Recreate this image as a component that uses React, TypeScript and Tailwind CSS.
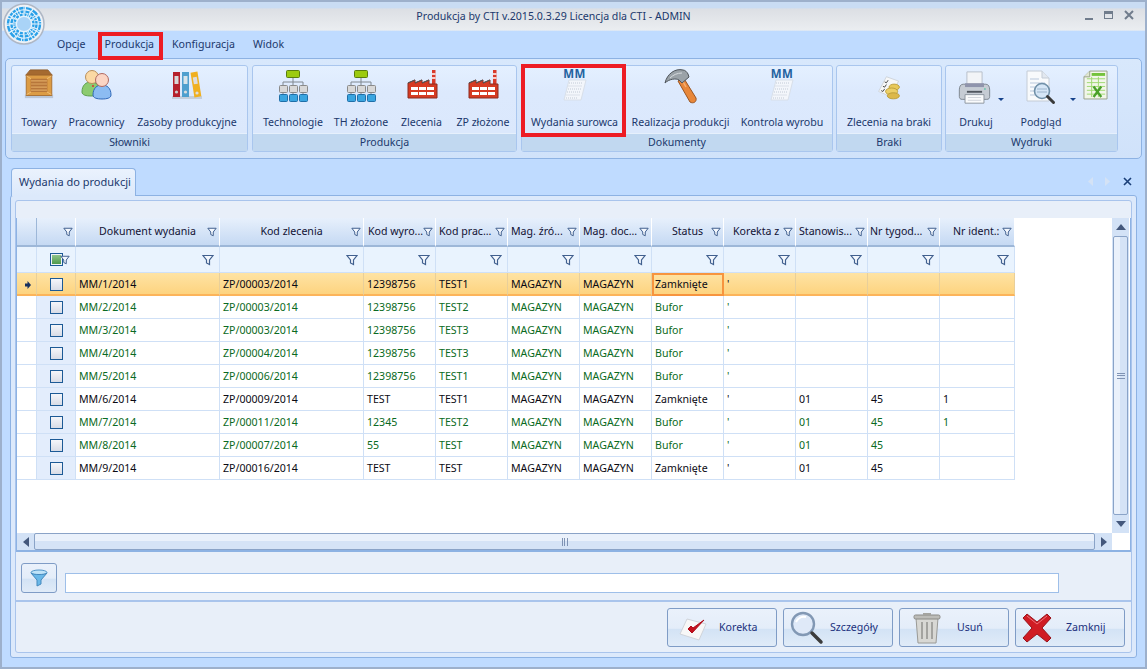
import type { ReactNode } from 'react'

const COLS =
  'grid grid-cols-[20px_39px_144px_144px_72px_72px_72px_72px_72px_72px_72px_72px_75px]'

const ROWS = [
  ['MM/1/2014', 'ZP/00003/2014', '12398756', 'TEST1', 'Zamknięte', '', '', ''],
  ['MM/2/2014', 'ZP/00003/2014', '12398756', 'TEST2', 'Bufor', '', '', ''],
  ['MM/3/2014', 'ZP/00003/2014', '12398756', 'TEST3', 'Bufor', '', '', ''],
  ['MM/4/2014', 'ZP/00004/2014', '12398756', 'TEST3', 'Bufor', '', '', ''],
  ['MM/5/2014', 'ZP/00006/2014', '12398756', 'TEST1', 'Bufor', '', '', ''],
  ['MM/6/2014', 'ZP/00009/2014', 'TEST', 'TEST1', 'Zamknięte', '01', '45', '1'],
  ['MM/7/2014', 'ZP/00011/2014', '12345', 'TEST2', 'Bufor', '01', '45', '1'],
  ['MM/8/2014', 'ZP/00007/2014', '55', 'TEST', 'Bufor', '01', '45', ''],
  ['MM/9/2014', 'ZP/00016/2014', 'TEST', 'TEST', 'Zamknięte', '01', '45', ''],
]

const HEADERS = [
  { label: 'Dokument wydania', cls: 'justify-center' },
  { label: 'Kod zlecenia', cls: 'justify-center' },
  { label: 'Kod wyro...', cls: 'pl-[4px]' },
  { label: 'Kod prac...', cls: 'pl-[3px]' },
  { label: 'Mag. źró...', cls: 'pl-[3px]' },
  { label: 'Mag. doc...', cls: 'pl-[3px]' },
  { label: 'Status', cls: 'justify-center' },
  { label: 'Korekta z', cls: 'pl-[9px]' },
  { label: 'Stanowis...', cls: 'pl-[3px]' },
  { label: 'Nr tygod...', cls: 'pl-[2px]' },
  { label: 'Nr ident.:', cls: 'pl-[13px]' },
]

function Funnel({ big }: { big?: boolean }) {
  return (
    <svg width={big ? 12 : 10} height={big ? 12 : 10} viewBox="0 0 12 12">
      <path d="M1 1.5h10L7.5 6v4.5l-3-1.5V6z" fill="#f4f8fe" stroke="#41608f" strokeWidth="1.2" />
    </svg>
  )
}

function Crate() {
  return (
    <svg width="30" height="32" viewBox="0 0 34 36">
      <rect x="1" y="30" width="32" height="4" fill="#b9c6d8" />
      <path d="M7 2h20l5 6H2z" fill="#a56a30" stroke="#8d5a28" />
      <rect x="2.5" y="8" width="29" height="23" fill="#dc9c45" stroke="#a86d2d" />
      <rect x="7.5" y="12" width="19" height="15" fill="#b7763a" />
      <path d="M8 14.5h18M8 18h18M8 21.5h18M8 25h18" stroke="#dfa862" strokeWidth="1.3" />
      <path d="M3 9l5 3M31 9l-5 3M3 30l5-3M31 30l-5-3" stroke="#f0c27a" />
    </svg>
  )
}

function People() {
  return (
    <svg width="34" height="34" viewBox="0 0 34 34">
      <path d="M2 24c0-7 4-10 9-10s9 3 9 10c0 3-4 4-9 4s-9-1-9-4z" fill="#8ccb70" stroke="#5d9e4e" />
      <circle cx="12" cy="9" r="6.5" fill="#fbd9a4" stroke="#b98f5c" />
      <circle cx="13" cy="18" r="1" fill="#e03030" />
      <path d="M13 27c0-7 4-10 9-10s9 3 9 10c0 3-4 4-9 4s-9-1-9-4z" fill="#8cbcf2" stroke="#2f68b8" />
      <circle cx="22" cy="12" r="6.5" fill="#fbd5c4" stroke="#b06a62" />
    </svg>
  )
}

function Binders() {
  return (
    <svg width="32" height="32" viewBox="0 0 32 32" className="mt-[2px]">
      <rect x="1" y="26" width="30" height="3" fill="#c4cedb" />
      <rect x="2" y="2" width="7" height="25" fill="#b5202c" />
      <rect x="3.5" y="6" width="4" height="8" fill="#d8d8d8" />
      <circle cx="5.5" cy="22" r="1.6" fill="#ccc" />
      <rect x="11" y="2" width="7" height="25" fill="#4f9fce" />
      <rect x="12.5" y="6" width="4" height="8" fill="#d8e4ea" />
      <circle cx="14.5" cy="22" r="1.6" fill="#ddd" />
      <rect x="21.5" y="2" width="7" height="25" fill="#f0b020" transform="rotate(-9 25 15)" />
      <rect x="23" y="7" width="4" height="7" fill="#ddd" transform="rotate(-9 25 15)" />
      <circle cx="26" cy="23" r="1.6" fill="#ddd" />
    </svg>
  )
}

function Hierarchy() {
  const box = (x: number, y: number, fill: string, stroke: string, w = 8, h = 7) => (
    <rect x={x + 0.5} y={y + 0.5} width={w} height={h} rx="1" fill={fill} stroke={stroke} strokeWidth="1" />
  )
  return (
    <svg width="32" height="34" viewBox="0 0 32 34">
      <path d="M16 9v5M6 17v-3h20v3M16 14v3M6 25v2M16 25v2M26 25v2" stroke="#808890" fill="none" />
      {box(9, 2, '#9ccb10', '#5a7e10', 13, 7)}
      {box(2, 17, '#d8d8d8', '#8a8a8a')}
      {box(12, 17, '#d8d8d8', '#8a8a8a')}
      {box(22, 17, '#d8d8d8', '#8a8a8a')}
      {box(2, 26, '#3aa5e0', '#1f6fa8')}
      {box(12, 26, '#3aa5e0', '#1f6fa8')}
      {box(22, 26, '#3aa5e0', '#1f6fa8')}
    </svg>
  )
}

function Factory() {
  return (
    <svg width="32" height="32" viewBox="0 0 32 32">
      <rect x="26" y="2" width="3.5" height="14" fill="#d83a2a" />
      <path d="M26 6h3.5M26 10h3.5" stroke="#fff" strokeWidth="1.4" />
      <path d="M2 30V15l7-3v3l7-3v3l7-3v4h8v14z" fill="#d63a22" stroke="#8c2c20" />
      <path d="M2 15l7-3M9 15l7-3M16 15l7-3" stroke="#555" strokeWidth="1.2" />
      <rect x="5" y="19" width="7" height="3" fill="#fff" />
      <rect x="13" y="19" width="7" height="3" fill="#fff" />
      <rect x="21" y="19" width="7" height="3" fill="#fff" />
      <rect x="5" y="24" width="7" height="3" fill="#fff" />
      <rect x="13" y="24" width="7" height="3" fill="#fff" />
      <rect x="21" y="24" width="7" height="3" fill="#fff" />
    </svg>
  )
}

function MmDoc() {
  return (
    <div className="flex flex-col items-center">
      <span className="text-[11.5px] leading-[12px] font-bold tracking-[0.5px] text-[#23629f] h-[11px]">MM</span>
      <svg width="24" height="22" viewBox="0 0 24 22">
        <path d="M6 1h17l-5 20H1z" fill="#f3f6fb" stroke="#d8dfe9" />
        <path d="M6 4h14M5.500 7h14M5 10h13M4 13h13M3.500 16h13M3 19h12" stroke="#c2cad6" strokeDasharray="1 1" />
      </svg>
    </div>
  )
}

function Hammer() {
  return (
    <svg width="34" height="36" viewBox="0 0 34 36">
      <path d="M14 13l5-4 13 21c1 4-3 6-6 4z" fill="#e8873a" stroke="#9a5420" />
      <path d="M18 12l4 7" stroke="#f5b070" strokeWidth="1.5" />
      <path d="M1 15C3 6 11 0 19 2c2 0 4 2 5 4l1 3-7 6-3-3c-3-2-10-1-14 3z" fill="#9aa2a8" stroke="#50565c" />
      <path d="M6 10c3-3 7-5 12-5" stroke="#d6dade" fill="none" />
    </svg>
  )
}

function Braki() {
  return (
    <svg width="26" height="26" viewBox="0 0 30 30" className="mt-[7px]">
      <path d="M12 2l14 5-9 18L3 19z" fill="#f6f7f8" stroke="#ccd2d8" />
      <path d="M10 8l2 1 2-3M8 13l2 1 2-3M6 18l2 1 2-3" stroke="#333" fill="none" />
      <ellipse cx="21" cy="14" rx="6" ry="3.500" fill="#e8c858" stroke="#b89a38" />
      <ellipse cx="18" cy="19" rx="7" ry="4" fill="#eccf66" stroke="#b89a38" />
      <ellipse cx="20" cy="24" rx="7" ry="3.500" fill="#dcb84a" stroke="#b89a38" />
    </svg>
  )
}

function Printer() {
  return (
    <svg width="33" height="36" viewBox="0 0 34 38" className="mt-[2px] -ml-[4px]">
      <path d="M9 2h16v14H9z" fill="#f2f4f7" stroke="#b6bec8" />
      <path d="M5 15h24c3 0 4 3 4 6v7c0 2-1 3-3 3H4c-2 0-3-1-3-3v-7c0-3 1-6 4-6z" fill="#c6ccd4" stroke="#7c848e" />
      <rect x="7" y="14" width="20" height="4" fill="#8f94ac" />
      <circle cx="28" cy="20" r="1" fill="#6fc8b0" />
      <path d="M7 26h20v9H7z" fill="#fafbfc" stroke="#8c949e" />
      <path d="M9 23h16" stroke="#50565e" strokeWidth="2" />
      <path d="M10 29h14M10 32h14" stroke="#cfd4da" />
    </svg>
  )
}

function Preview() {
  return (
    <svg width="32" height="36" viewBox="0 0 32 36" className="mt-[2px]">
      <path d="M2 1h15l7 7v23H2z" fill="#f8fafc" stroke="#c4ccd6" />
      <path d="M17 1v7h7" fill="#e2e8f0" stroke="#c4ccd6" />
      <path d="M5 9h9M5 13h15M5 17h6M5 21h6M5 25h8" stroke="#b9c8dc" />
      <circle cx="17" cy="21" r="7.500" fill="#cfe2f5" fillOpacity="0.85" stroke="#7090a8" strokeWidth="1.6" />
      <path d="M12 19h10M12 22h10" stroke="#9cb4cc" />
      <path d="M22.500 26.500l6 6" stroke="#3a3a3a" strokeWidth="3" strokeLinecap="round" />
    </svg>
  )
}

function Excel() {
  return (
    <svg width="25" height="31" viewBox="0 0 26 32" className="mt-[2px] -ml-[2px]">
      <path d="M7 1h18v29H1V7z" fill="#f2f6ea" stroke="#97a088" />
      <path d="M7 1v6H1" fill="#dfe6d0" stroke="#97a088" />
      <rect x="9" y="3" width="14" height="3" fill="#74c23c" />
      <path d="M4 9h19M4 13h19M4 17h19M4 21h19M4 25h19M9 7v21M16 7v21" stroke="#9ed870" />
      <path d="M11 17l8 11M19 17l-8 11" stroke="#4aa02a" strokeWidth="2.4" />
    </svg>
  )
}

function CheckPaper() {
  return (
    <svg width="28" height="28" viewBox="0 0 28 28">
      <path d="M8 5l19 5-7 16L1 20z" fill="#f7f7f7" stroke="#d0d4da" />
      <path d="M9 15l4 4 12-13-11 8-2-2z" fill="#c4101c" stroke="#b00c18" />
    </svg>
  )
}

function BigLens() {
  return (
    <svg width="34" height="34" viewBox="0 0 34 34">
      <circle cx="13" cy="13" r="11" fill="#dfe9f8" stroke="#8298b4" strokeWidth="2.4" />
      <path d="M6 11c2-4 6-6 10-5" stroke="#fff" strokeWidth="2" fill="none" />
      <path d="M22 22l9 9" stroke="#3c3c3c" strokeWidth="3.500" strokeLinecap="round" />
    </svg>
  )
}

function Trash() {
  return (
    <svg width="28" height="32" viewBox="0 0 28 32">
      <path d="M3 6h22l-2 25H5z" fill="#d8d8d4" stroke="#9a9a96" />
      <rect x="1" y="3" width="26" height="4" rx="1.500" fill="#bcbcb8" stroke="#8a8a86" />
      <rect x="10" y="1" width="8" height="2" fill="#a4a4a0" />
      <path d="M9 10v17M14 10v17M19 10v17" stroke="#8e8e8a" strokeWidth="1.4" />
    </svg>
  )
}

function RedX() {
  return (
    <svg width="30" height="30" viewBox="0 0 30 30">
      <path
        d="M5 1l10 8 10-8 4 4-9 10 9 10-4 4-10-8-10 8-4-4 9-10-9-10z"
        fill="#d01c24"
        stroke="#98141c"
      />
      <path d="M5 3l10 8 10-8" stroke="#ee7078" fill="none" />
    </svg>
  )
}

function Logo() {
  const spokes = [0, 30, 60, 90, 120, 150]
  return (
    <svg width="42" height="42" viewBox="0 0 42 42">
      <circle cx="21" cy="21" r="20" fill="#eef1f6" stroke="#aeb7c5" strokeWidth="1.5" />
      <circle cx="21" cy="21" r="17.500" fill="#e4f2fc" />
      <circle cx="21" cy="21" r="16" fill="none" stroke="#29a0e8" strokeWidth="2.4" strokeDasharray="6 1" />
      <circle cx="21" cy="21" r="12.500" fill="none" stroke="#29a0e8" strokeWidth="2.4" strokeDasharray="4 1" />
      <circle cx="21" cy="21" r="9.500" fill="none" stroke="#29a0e8" strokeWidth="2.4" strokeDasharray="3 1" />
      {spokes.map((a) => (
        <path key={a} d="M21 3v36" stroke="#e4f2fc" strokeWidth="1" transform={`rotate(${a} 21 21)`} />
      ))}
      <circle cx="21" cy="21" r="7" fill="#a9d3f7" />
    </svg>
  )
}

function RibbonBtn({ w, icon, label, mark }: { w: string; icon: ReactNode; label: string; mark?: boolean }) {
  return (
    <div className={`${w} relative flex flex-col items-center shrink-0`}>
      <div className="h-[49px] pt-[2px] flex items-start justify-center">{icon}</div>
      <span className="whitespace-nowrap leading-[14px] text-[#20386c]">{label}</span>
      {mark && (
        <div className="absolute left-[-1px] top-[-2px] w-[105px] h-[73px] border-4 border-[#ed1c24]" />
      )}
    </div>
  )
}

function Group({ w, title, children }: { w: string; title: string; children: ReactNode }) {
  return (
    <div className={`${w} h-[87px] flex flex-col border border-[#a9c6ee] rounded-[3px] overflow-visible`}>
      <div className="h-[67px] flex bg-[linear-gradient(#e4f0ff,#dce9fd_40%,#dbe8fc)] rounded-t-[3px]">{children}</div>
      <div className="flex-1 flex items-center justify-center bg-[#c1d8f0] text-[#20386c] border-t border-[#e6f0fc]">
        {title}
      </div>
    </div>
  )
}

function ActionBtn({ icon, label, iconCls, labelCls }: { icon: ReactNode; label: string; iconCls: string; labelCls: string }) {
  return (
    <div className="w-[110px] h-[39px] relative flex items-center border border-[#7f9cc6] rounded-[3px] bg-[linear-gradient(#eaf1fb,#e4edf9_52%,#d3e3f5_55%,#e0ebf8)]">
      <div className={`${iconCls} shrink-0 flex`}>{icon}</div>
      <span className={`${labelCls} text-[#20307c]`}>{label}</span>
    </div>
  )
}

function Triangle({ dir }: { dir: 'up' | 'down' | 'left' | 'right' }) {
  const d = { up: 'M0 6L5 0l5 6z', down: 'M0 0h10L5 6z', left: 'M6 0v10L0 5z', right: 'M0 0v10l6-5z' }[dir]
  return (
    <svg width={dir === 'up' || dir === 'down' ? 10 : 6} height={dir === 'up' || dir === 'down' ? 6 : 10}>
      <path d={d} fill="#44587c" />
    </svg>
  )
}

export default function App() {
  return (
    <div className="relative w-screen h-screen overflow-hidden flex flex-col bg-[#bfdbff] border-2 border-[#9db0cb] text-[10.6px] [font-family:'Noto_Sans',sans-serif]">
      <div className="absolute left-px top-px z-10">
        <Logo />
      </div>

      {/* title bar */}
      <div className="relative h-[29px] shrink-0 flex items-center justify-center bg-[linear-gradient(#c9dcf3,#c9dcf3_20%,#dcdfe4_24%,#eaedf0_95%,#d5e4f7)] text-[#20386c]">
        <span className="mr-[40px]">Produkcja by CTI v.2015.0.3.29 Licencja dla CTI - ADMIN</span>
        <div className="absolute right-[11px] top-[8px] flex items-center gap-[11px]">
          <div className="w-[8px] h-[2px] mt-[8px] bg-[#707c8c]" />
          <div className="w-[9px] h-[8px] border border-[#707c8c] border-t-[3px]" />
          <svg width="10" height="10" viewBox="0 0 10 10">
            <path d="M1 1l8 8M9 1l-8 8" stroke="#707c8c" strokeWidth="2" />
          </svg>
        </div>
      </div>

      {/* menu */}
      <div className="h-[27px] shrink-0 flex items-center pt-px pl-[46px] text-[#20386c]">
        <span className="pl-[9px] pr-[10px]">Opcje</span>
        <span className="relative px-[9px] h-[26px] flex items-center">
          Produkcja
          <span className="absolute left-[2px] top-0 w-[65px] h-[28px] border-4 border-[#ed1c24]" />
        </span>
        <span className="pl-[9px] pr-[9px]">Konfiguracja</span>
        <span className="pl-[9px] pr-[9px]">Widok</span>
      </div>

      {/* ribbon */}
      <div className="h-[101px] shrink-0 mx-[3px] pl-[5px] pt-[6px] flex border border-[#8db2e3] rounded-[5px] bg-[linear-gradient(#d8e8fc,#d0e2fa)]">
        <Group w="w-[237px] mr-[4px]" title="Słowniki">
          <RibbonBtn w="w-[54px]" icon={<Crate />} label="Towary" />
          <RibbonBtn w="w-[61px]" icon={<People />} label="Pracownicy" />
          <RibbonBtn w="w-[120px]" icon={<Binders />} label="Zasoby produkcyjne" />
        </Group>
        <Group w="w-[265px] mr-[4px]" title="Produkcja">
          <RibbonBtn w="w-[80px]" icon={<Hierarchy />} label="Technologie" />
          <RibbonBtn w="w-[56px]" icon={<Hierarchy />} label="TH złożone" />
          <RibbonBtn w="w-[65px]" icon={<Factory />} label="Zlecenia" />
          <RibbonBtn w="w-[58px]" icon={<Factory />} label="ZP złożone" />
        </Group>
        <Group w="w-[312px] mr-[3px]" title="Dokumenty">
          <RibbonBtn w="w-[105px]" icon={<MmDoc />} label="Wydania surowca" mark />
          <RibbonBtn w="w-[107px]" icon={<Hammer />} label="Realizacja produkcji" />
          <RibbonBtn w="w-[96px]" icon={<MmDoc />} label="Kontrola wyrobu" />
        </Group>
        <Group w="w-[106px] mr-[3px]" title="Braki">
          <RibbonBtn w="w-[104px]" icon={<Braki />} label="Zlecenia na braki" />
        </Group>
        <Group w="w-[173px]" title="Wydruki">
          <RibbonBtn w="w-[60px]" icon={<Printer />} label="Drukuj" />
          <div className="w-0 relative">
            <div className="absolute left-[-8px] top-[32px] w-0 h-0 border-x-[3px] border-x-transparent border-t-[3px] border-t-[#15428b]" />
          </div>
          <RibbonBtn w="w-[70px]" icon={<Preview />} label="Podgląd" />
          <div className="w-0 relative">
            <div className="absolute left-[-6px] top-[32px] w-0 h-0 border-x-[3px] border-x-transparent border-t-[3px] border-t-[#15428b]" />
          </div>
          <RibbonBtn w="w-[41px]" icon={<Excel />} label="" />
        </Group>
      </div>

      {/* tab strip */}
      <div className="h-[27px] mt-[9px] shrink-0 ml-[8px] mr-[8px] flex items-end justify-between">
        <div className="relative z-10 -mb-px ml-[1px] w-[125px] h-[28px] flex items-center pl-[7px] border border-b-0 border-[#8db2e3] rounded-t-[4px] bg-[linear-gradient(#eaf2fd,#dce9fb)] text-[11px] text-[#20386c] whitespace-nowrap">
          Wydania do produkcji
        </div>
        <div className="flex items-center gap-[12px] h-[27px] pr-[5px]">
          <svg width="5" height="9">
            <path d="M5 0v9L0 4.500z" fill="#d4e2f5" />
          </svg>
          <svg width="5" height="9">
            <path d="M0 0v9l5-4.500z" fill="#d4e2f5" />
          </svg>
          <svg width="9" height="9" className="ml-[1px]">
            <path d="M1 1l7 7M8 1l-7 7" stroke="#1a3f78" strokeWidth="1.6" />
          </svg>
        </div>
      </div>

      {/* tab page */}
      <div className="flex-1 min-h-0 mx-[8px] mb-[9px] p-[4px] border border-[#8db2e3] rounded-[3px] bg-[#dce9fb] flex flex-col">
        <div className="flex-1 min-h-0 flex flex-col border border-[#a9c4ec] rounded-[3px] bg-[#e8eff9]">
          <div className="h-[17px] shrink-0" />

          {/* grid */}
          <div className="h-[334px] shrink-0 flex flex-col bg-white border-x border-b-2 border-[#8db2e3]">
            <div className="h-[315px] flex">
              <div className="w-[1095px] bg-white">
                <div className={`${COLS} h-[29px] w-[998px]`}>
                  <div className="border-r border-b-2 border-[#9db7d8] bg-[linear-gradient(#e7f0fc,#c5d9f3)]" />
                  <div className="relative border-r border-b-2 border-r-white border-b-[#9db7d8] bg-[linear-gradient(#e7f0fc,#c5d9f3)] flex items-center justify-end pr-[2px]">
                    <Funnel />
                  </div>
                  {HEADERS.map((h) => (
                    <div
                      key={h.label}
                      className={`${h.cls} relative flex items-center border-r border-b-2 border-r-white border-b-[#9db7d8] bg-[linear-gradient(#e7f0fc,#c5d9f3)] text-[#111133] whitespace-nowrap`}
                    >
                      {h.label}
                      <span className="absolute right-[2px] top-[9px] flex">
                        <Funnel />
                      </span>
                    </div>
                  ))}
                </div>
                <div className={`${COLS} h-[26px] w-[998px] bg-[#e9f3fe]`}>
                  <div className="border-r border-b border-[#cfe0f6]" />
                  <div className="relative border-r border-b border-[#cfe0f6] flex items-center pl-[13px]">
                    <div className="w-[13px] h-[13px] border border-[#1c5a96] bg-[#f0f4fa] p-px">
                      <div className="w-full h-full bg-[linear-gradient(#8fc48a,#4f9a4c)]" />
                    </div>
                    <span className="-ml-[3px] flex">
                      <Funnel />
                    </span>
                  </div>
                  {HEADERS.map((h) => (
                    <div key={h.label} className="border-r border-b border-[#cfe0f6] flex items-center justify-end pr-[5px]">
                      <Funnel big />
                    </div>
                  ))}
                </div>
                {ROWS.map((r, i) => {
                  const selected = i === 0
                  const dark = r[4] === 'Zamknięte'
                  const line = selected
                    ? 'border-b-2 border-b-[#fcb45a] border-r-[#e8cf9a] pt-[2px]'
                    : 'border-b border-[#cfe0f6] pt-px'
                  const cell = `border-r border-[#cfe0f6] ${line} flex items-center pl-[3px] whitespace-nowrap`
                  return (
                    <div
                      key={r[0]}
                      className={`${COLS} h-[23px] w-[998px] ${selected ? 'bg-[linear-gradient(#fee3a4,#fdd27c)]' : 'bg-white'} ${dark ? 'text-[#0b0b14]' : 'text-[#0a6a22]'}`}
                    >
                      <div className={`${cell} justify-center`}>
                        {selected && (
                          <svg width="6" height="8">
                            <path d="M0 2.500h2.500V0L6 4 2.500 8V5.500H0z" fill="#16305f" />
                          </svg>
                        )}
                      </div>
                      <div className={`${cell} ${selected ? '' : 'bg-[#e3edfc]'} pl-[13px]`}>
                        <div className="w-[13px] h-[13px] border border-[#1c5a96] bg-[linear-gradient(#f5f6fa,#d8dce6)]" />
                      </div>
                      <div className={cell}>{r[0]}</div>
                      <div className={cell}>{r[1]}</div>
                      <div className={cell}>{r[2]}</div>
                      <div className={cell}>{r[3]}</div>
                      <div className={cell}>MAGAZYN</div>
                      <div className={cell}>MAGAZYN</div>
                      <div className={selected ? 'border-2 border-[#f7943e] flex items-center pl-px whitespace-nowrap' : cell}>
                        {r[4]}
                      </div>
                      <div className={cell}>'</div>
                      <div className={cell}>{r[5]}</div>
                      <div className={cell}>{r[6]}</div>
                      <div className={cell}>{r[7]}</div>
                    </div>
                  )
                })}
              </div>

              {/* vertical scrollbar */}
              <div className="w-[17px] flex flex-col bg-[#d3e2f6]">
                <div className="h-[18px] flex items-center justify-center">
                  <Triangle dir="up" />
                </div>
                <div className="flex-1 mx-[1px] flex items-center justify-center border border-[#8aa3c7] rounded-[2px] bg-[linear-gradient(90deg,#eaf1fb,#eaf1fb_45%,#d5e3f6_50%,#d5e3f6)]">
                  <div className="w-[8px] h-[6px] border-y border-[#7f93b4] flex items-center">
                    <div className="w-full h-px bg-[#7f93b4]" />
                  </div>
                </div>
                <div className="h-[18px] flex items-center justify-center">
                  <Triangle dir="down" />
                </div>
              </div>
            </div>

            {/* horizontal scrollbar */}
            <div className="h-[17px] flex">
              <div className="w-[1095px] flex bg-[#d3e2f6]">
                <div className="w-[17px] flex items-center justify-center">
                  <Triangle dir="left" />
                </div>
                <div className="flex-1 flex items-center justify-center border border-[#8aa3c7] rounded-[2px] bg-[linear-gradient(#eaf1fb,#eaf1fb_45%,#d5e3f6_50%,#d5e3f6)]">
                  <div className="w-[6px] h-[8px] border-x border-[#7f93b4] flex justify-center">
                    <div className="w-px h-full bg-[#7f93b4]" />
                  </div>
                </div>
                <div className="w-[17px] flex items-center justify-center">
                  <Triangle dir="right" />
                </div>
              </div>
              <div className="w-[17px] bg-white" />
            </div>
          </div>

          {/* filter bar */}
          <div className="h-[50px] shrink-0 flex items-start border-b-2 border-[#a9c4ec] pl-[5px] pt-[11px]">
            <div className="w-[36px] h-[30px] flex items-center justify-center border border-[#7f9cc6] rounded-[3px] bg-[linear-gradient(#eaf1fb,#e4edf9_50%,#d3e3f5_55%,#e0ebf8)]">
              <svg width="18" height="18" viewBox="0 0 18 18">
                <ellipse cx="9" cy="3.500" rx="8" ry="2.500" fill="#bfe3f8" stroke="#4f94c8" />
                <path d="M1 4l6 7v6l4-2v-4l6-7c-2 2-14 2-16 0z" fill="#6ab8e8" stroke="#4589bd" />
              </svg>
            </div>
            <div className="ml-[8px] mt-[10px] w-[994px] h-[20px] bg-white border border-[#9ebfe9]" />
          </div>

          {/* buttons */}
          <div className="flex-1 flex justify-end gap-[6px] pt-[6px] pr-[6px]">
            <ActionBtn icon={<CheckPaper />} label="Korekta" iconCls="ml-[11px] mr-[11px]" labelCls="ml-[1px]" />
            <ActionBtn icon={<BigLens />} label="Szczegóły" iconCls="ml-[6px] mr-[5px]" labelCls="ml-[1px]" />
            <ActionBtn icon={<Trash />} label="Usuń" iconCls="ml-[13px] mr-[15px]" labelCls="ml-[1px]" />
            <ActionBtn icon={<RedX />} label="Zamknij" iconCls="ml-[6px] mr-[13px]" labelCls="ml-[1px]" />
          </div>
        </div>
      </div>
    </div>
  )
}
